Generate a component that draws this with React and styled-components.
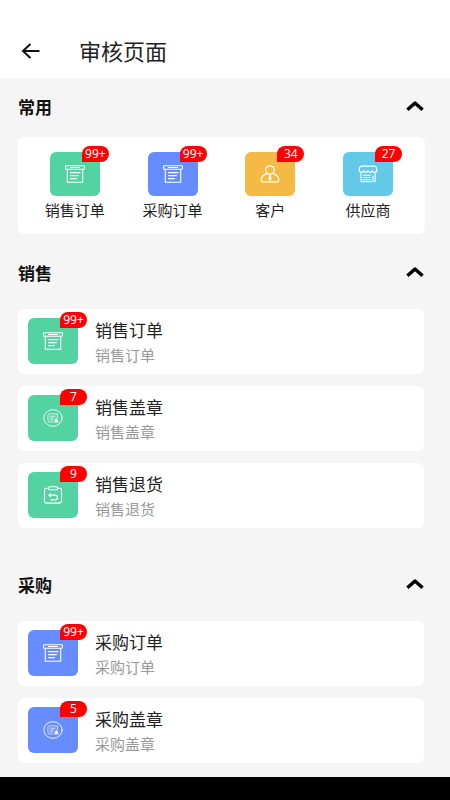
import React, { useState } from 'react';
import styled, { createGlobalStyle } from 'styled-components';

const GlobalStyle = createGlobalStyle`
  * {
    box-sizing: border-box;
  }

  body {
    margin: 0;
    background: #f5f5f5;
    font-family: "Noto Sans", "Noto Sans CJK SC", sans-serif;
    color: #222;
  }

  button {
    font-family: inherit;
  }
`;

const COLORS = {
  green: '#54d3a2',
  blue: '#678cff',
  orange: '#f5b946',
  cyan: '#62cae8',
};

const Page = styled.div`
  display: flex;
  flex-direction: column;
  height: 100vh;
`;

const Header = styled.header`
  display: flex;
  align-items: center;
  gap: 35px;
  flex-shrink: 0;
  padding: 26px 18px 2px;
  height: 78px;
  background: #fff;
`;

const BackButton = styled.button`
  display: flex;
  padding: 0;
  border: none;
  background: none;
  color: #111;
  cursor: pointer;
`;

const PageTitle = styled.h1`
  margin: 0;
  font-size: 22px;
  line-height: 30px;
  font-weight: 400;
`;

const Content = styled.main`
  flex: 1;
  min-height: 0;
  overflow-y: auto;
  scrollbar-width: none;
`;

const SectionHeader = styled.div`
  display: flex;
  align-items: center;
  justify-content: space-between;
  height: 59px;
  padding: 0 26px 0 18px;
`;

const SectionTitle = styled.h2`
  margin: 0;
  font-size: 17px;
  line-height: 24px;
  font-weight: 700;
  color: #111;
`;

const ToggleButton = styled.button`
  display: flex;
  padding: 0 0 3px;
  border: none;
  background: none;
  color: #000;
  cursor: pointer;

  svg {
    transform: ${props => (props.$open ? 'none' : 'rotate(180deg)')};
  }
`;

const ShortcutCard = styled.nav`
  display: grid;
  grid-template-columns: repeat(4, 1fr);
  margin: 0 25px 10px 18px;
  padding: 15px 8px 13px;
  background: #fff;
  border-radius: 6px;
`;

const Shortcut = styled.a`
  display: flex;
  flex-direction: column;
  align-items: center;
  gap: 3px;
  color: #222;
  font-size: 15px;
  line-height: 22px;
  text-decoration: none;
`;

const List = styled.div`
  display: flex;
  flex-direction: column;
  gap: 12px;
  padding: 6px 26px 28px 18px;
`;

const Row = styled.a`
  display: flex;
  align-items: center;
  gap: 17px;
  height: 65px;
  padding: 0 10px 1px;
  background: #fff;
  border-radius: 6px;
  color: #222;
  text-decoration: none;
`;

const RowText = styled.div`
  display: flex;
  flex-direction: column;
  padding-top: 1px;
`;

const RowTitle = styled.span`
  font-size: 17px;
  line-height: 27px;
`;

const RowSubtitle = styled.span`
  font-size: 15px;
  line-height: 22px;
  color: #999;
`;

const Tile = styled.span`
  position: relative;
  display: flex;
  align-items: center;
  justify-content: center;
  flex-shrink: 0;
  width: 50px;
  height: ${props => (props.$tall ? 46 : 44)}px;
  border-radius: 6px;
  background: ${props => COLORS[props.$color]};
`;

const Badge = styled.span`
  position: absolute;
  top: -6px;
  right: -9px;
  width: 27px;
  height: 16px;
  border-radius: 8px 8px 8px 0;
  background: #f00;
  color: #fff;
  font-size: 12px;
  line-height: 16px;
  text-align: center;
`;

const SystemBar = styled.div`
  flex-shrink: 0;
  height: 23px;
  background: #000;
`;

const LineIcon = styled.svg.attrs({
  width: 20,
  height: 18,
  viewBox: '0 0 20 18',
  fill: 'none',
  stroke: '#fff',
  strokeLinecap: 'round',
  strokeLinejoin: 'round',
  'aria-hidden': true,
})`
  display: block;
  stroke-width: 1.1;
`;

const OrderIcon = () => (
  <LineIcon>
    <rect x="0.6" y="0.8" width="18.8" height="3.4" rx="0.6" />
    <path d="M5.5 2.5h9M2.3 4.2v13.1h15.4V4.2M5.5 7.6h9.5M5.5 10.6h8M5.5 13.6h6" />
  </LineIcon>
);

const CustomerIcon = () => (
  <LineIcon>
    <ellipse cx="10" cy="5" rx="4.4" ry="4.2" strokeWidth="1.2" />
    <path
      d="M7 8.6C3.6 9.5 1.3 12 1.2 15.3c0 1 .5 1.5 1.4 1.5h14.8c.9 0 1.4-.5 1.4-1.5-.1-3.3-2.4-5.8-5.8-6.7"
      strokeWidth="1.2"
    />
    <path d="M9.4 10h1.2l.6 4.2-1.2 1.4-1.2-1.4z" fill="#fff" strokeWidth="0.4" />
  </LineIcon>
);

const SupplierIcon = () => (
  <LineIcon>
    <path
      d="M3.6 1.2h12.8c1.4 0 2.4 2 2.4 3.7 0 1.5-1.1 2.4-2.3 2.4s-2.2-.8-2.2-1.8c0 1-1 1.8-2.1 1.8s-2.2-.8-2.2-1.8c0 1-1 1.8-2.2 1.8s-2.1-.8-2.1-1.8c0 1-1 1.8-2.2 1.8s-2.3-.9-2.3-2.4c0-1.7 1-3.7 2.4-3.7z"
      strokeWidth="1.2"
    />
    <path d="M3 8.6v7.2c0 .6.4 1 1 1h9.4M17.2 8.6v8.2M15 11v5.8M5.2 10.3h7M5.2 12.5h7M5.2 14.6h7" />
  </LineIcon>
);

const StampIcon = () => (
  <LineIcon>
    <ellipse cx="10" cy="9" rx="9.2" ry="8.3" strokeWidth="0.9" />
    <path
      d="M14.4 9V4.9H6.2c-.9 0-1.2.5-1.2 1.2v5.4c0 .9.4 1.4 1.2 1.4h3.3M7.2 7.2h5M7.2 9h4M7.2 10.8h2.6"
      strokeWidth="0.7"
    />
    <path d="M11.8 11.7l.8-.6c-.7-1.7 2.3-1.7 1.6 0l.9.6v.5h-3.3zM11 13.2h4.4" fill="#fff" strokeWidth="0.7" />
  </LineIcon>
);

const ReturnIcon = () => (
  <LineIcon>
    <path
      d="M5.3 2.2H3.4c-1.2 0-1.9.7-1.9 1.8v11.3c0 1.1.7 1.8 1.9 1.8h13.2c1.2 0 1.9-.7 1.9-1.8V4c0-1.1-.7-1.8-1.9-1.8h-1.9"
      strokeWidth="1.1"
    />
    <rect x="5.4" y="0.8" width="9.2" height="3" rx="1.3" strokeWidth="1.1" />
    <path d="M6.3 9.2h5.6c3.4 0 3.4 4.6 0 4.6H8M7.6 7.9L5.9 9.2l1.7 1.3" strokeWidth="1.3" />
  </LineIcon>
);

const ICONS = {
  order: OrderIcon,
  customer: CustomerIcon,
  supplier: SupplierIcon,
  stamp: StampIcon,
  return: ReturnIcon,
};

const shortcuts = [
  { label: '销售订单', icon: 'order', color: 'green', count: 128 },
  { label: '采购订单', icon: 'order', color: 'blue', count: 116 },
  { label: '客户', icon: 'customer', color: 'orange', count: 34 },
  { label: '供应商', icon: 'supplier', color: 'cyan', count: 27 },
];

const groups = [
  {
    title: '销售',
    color: 'green',
    items: [
      { label: '销售订单', icon: 'order', count: 128 },
      { label: '销售盖章', icon: 'stamp', count: 7 },
      { label: '销售退货', icon: 'return', count: 9 },
    ],
  },
  {
    title: '采购',
    color: 'blue',
    items: [
      { label: '采购订单', icon: 'order', count: 116 },
      { label: '采购盖章', icon: 'stamp', count: 5 },
    ],
  },
];

const IconTile = ({ icon, color, count, tall }) => {
  const Icon = ICONS[icon];

  return (
    <Tile $color={color} $tall={tall}>
      <Icon />
      {count > 0 && <Badge>{count > 99 ? '99+' : count}</Badge>}
    </Tile>
  );
};

const Section = ({ title, children }) => {
  const [open, setOpen] = useState(true);

  return (
    <section>
      <SectionHeader>
        <SectionTitle>{title}</SectionTitle>
        <ToggleButton
          type="button"
          $open={open}
          aria-expanded={open}
          aria-label={title}
          onClick={() => setOpen(!open)}
        >
          <svg width="18" height="12" viewBox="0 0 18 12" fill="none" stroke="currentColor" strokeWidth="3.4">
            <path d="M1.4 9.8L9 3l7.6 6.8" strokeLinejoin="round" />
          </svg>
        </ToggleButton>
      </SectionHeader>
      {open && children}
    </section>
  );
};

const App = () => (
  <>
    <GlobalStyle />
    <Page>
      <Header>
        <BackButton type="button" aria-label="返回">
          <svg width="26" height="24" viewBox="0 0 26 24" fill="none" stroke="currentColor" strokeWidth="2">
            <path d="M21.5 12H5.5M12.5 5l-7.5 7 7.5 7" />
          </svg>
        </BackButton>
        <PageTitle>审核页面</PageTitle>
      </Header>

      <Content>
        <Section title="常用">
          <ShortcutCard>
            {shortcuts.map(item => (
              <Shortcut href="#" key={item.label}>
                <IconTile icon={item.icon} color={item.color} count={item.count} />
                {item.label}
              </Shortcut>
            ))}
          </ShortcutCard>
        </Section>

        {groups.map(group => (
          <Section title={group.title} key={group.title}>
            <List>
              {group.items.map(item => (
                <Row href="#" key={item.label}>
                  <IconTile icon={item.icon} color={group.color} count={item.count} tall />
                  <RowText>
                    <RowTitle>{item.label}</RowTitle>
                    <RowSubtitle>{item.label}</RowSubtitle>
                  </RowText>
                </Row>
              ))}
            </List>
          </Section>
        ))}
      </Content>

      <SystemBar />
    </Page>
  </>
);

export default App;
